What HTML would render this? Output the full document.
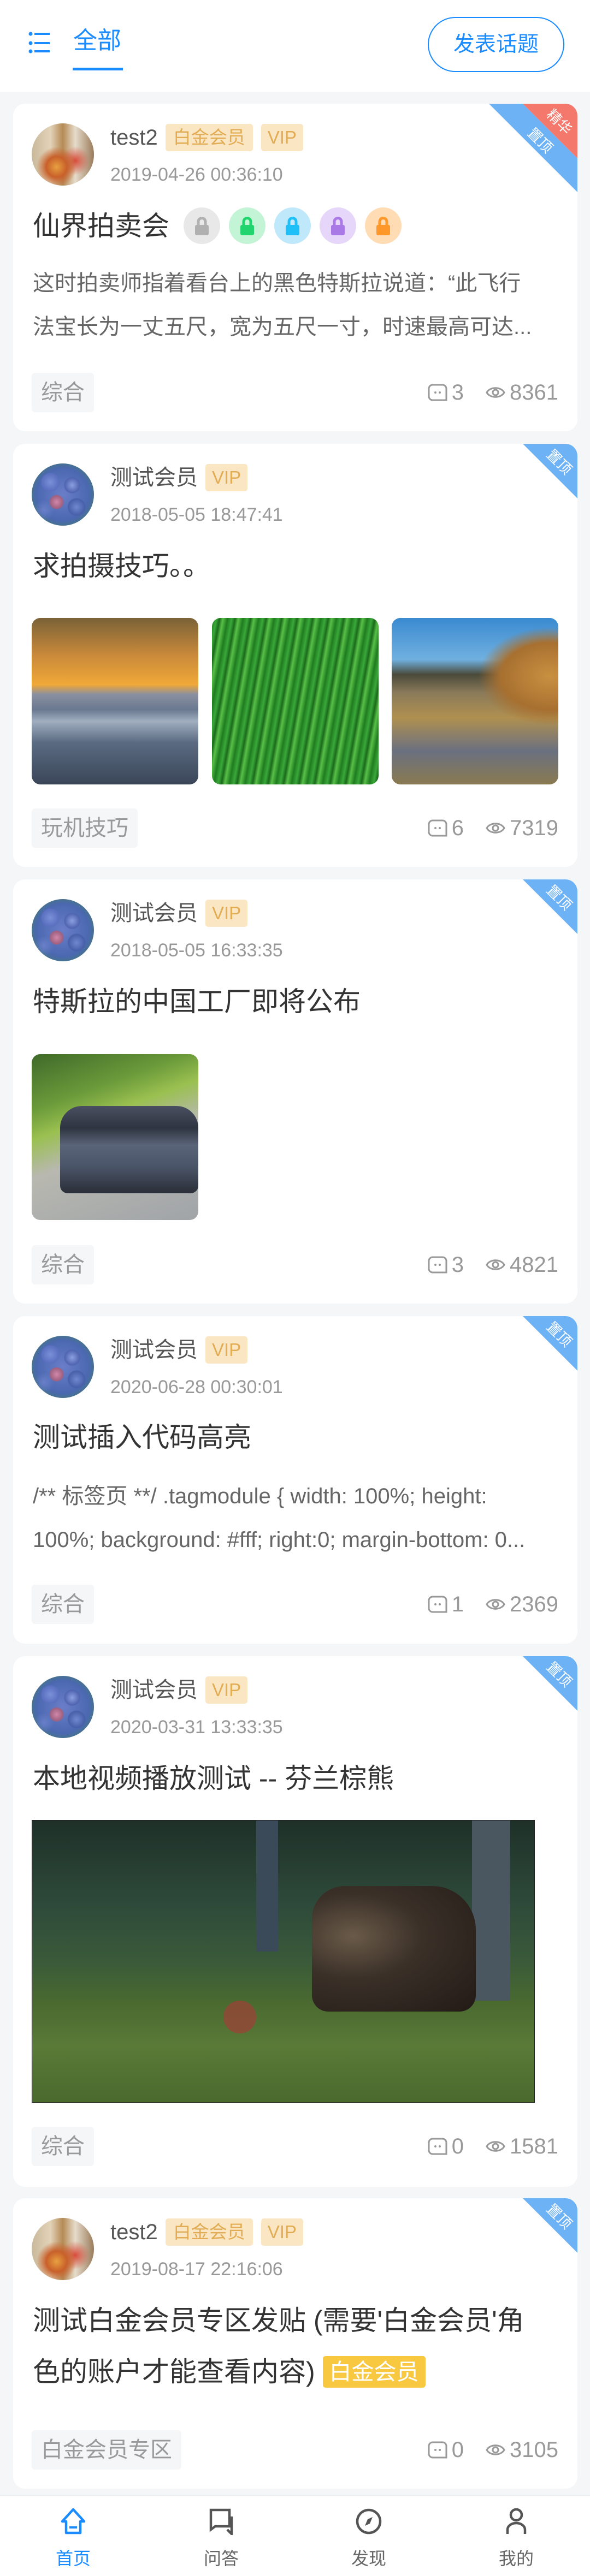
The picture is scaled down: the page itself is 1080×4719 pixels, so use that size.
<!DOCTYPE html>
<html><head><meta charset="utf-8">
<style>
*{margin:0;padding:0;box-sizing:border-box}
body{width:1080px;height:4719px;background:#f5f6f8;font-family:"Liberation Sans","Noto Sans CJK SC",sans-serif;position:relative;overflow:hidden}
.hdr{position:absolute;left:0;top:0;width:1080px;height:168px;background:#fff}
.card{position:absolute;left:24px;width:1033px;background:#fff;border-radius:22px;overflow:hidden}
.card>*{position:absolute}
.av{left:34px;top:36px;width:114px;height:114px;border-radius:50%}
.av1{background:radial-gradient(circle at 40% 70%,#e8a040 0,#c8602a 18%,transparent 35%),radial-gradient(circle at 70% 60%,#d84a3a 0,transparent 25%),linear-gradient(90deg,#c9b89a,#e2d3b8 30%,#b58a55 50%,#e6dccb 70%,#9a7a5a)}
.av2{background:radial-gradient(circle at 30% 30%,#7a90d8 0,#5a70c0 14%,transparent 16%),radial-gradient(circle at 65% 35%,#8aa0e0 0,#5064b0 13%,transparent 15%),radial-gradient(circle at 40% 62%,#d088a8 0,#a06080 12%,transparent 14%),radial-gradient(circle at 72% 70%,#7088d0 0,#4860a8 13%,transparent 15%),radial-gradient(circle at 20% 75%,#6a80c8 0,transparent 15%),radial-gradient(circle,#6a7ec8 0,#4a68b0 60%,#3f8a3a 100%)}
.nm{left:178px;top:37px;font-size:40px;line-height:50px;color:#555;white-space:nowrap}
.bd{display:inline-block;vertical-align:top;margin-left:14px;height:50px;line-height:50px;padding:0 14px;font-size:33px;color:#e2ac55;background:#fbe6c3;border-radius:5px}
.bd+.bd{margin-left:15px;padding:0 12px}
.dt{left:178px;top:110px;font-size:34px;line-height:40px;color:#999}
.tt{left:36px;top:194px;font-size:50px;line-height:60px;color:#333;white-space:nowrap}
.ex{left:36px;top:289px;font-size:40px;line-height:80px;color:#666;white-space:nowrap}
.tag{left:34px;height:72px;line-height:72px;padding:0 17px;font-size:40px;color:#999;background:#f5f6f8;border-radius:6px}
.st{right:35px;height:72px;display:flex;align-items:center;font-size:40px;color:#999}
.st svg{margin-right:8px}
.rb{right:0;top:0;width:170px;height:170px}
.lk{display:inline-block;width:67px;height:67px;border-radius:50%;vertical-align:top;margin-left:16px;position:relative;top:-4px}
.tab{position:absolute;top:4571px;left:0;width:1080px;height:148px;background:#fff;border-top:1px solid #eceef0}
.ti{position:absolute;top:22px;width:160px;text-align:center;font-size:32px;color:#666}
.ti svg{display:block;margin:0 auto 18px}
</style></head><body>
<div class="hdr">
<svg style="position:absolute;left:50px;top:58px" width="44" height="42" viewBox="0 0 44 42"><g fill="#1a8cff"><circle cx="6" cy="4" r="3.5"/><circle cx="6" cy="21" r="3.5"/><circle cx="6" cy="36" r="3.5"/><rect x="13" y="2" width="28" height="4"/><rect x="13" y="19" width="28" height="4"/><rect x="13" y="34" width="28" height="4"/></g></svg>
<div style="position:absolute;left:134px;top:50px;font-size:44px;line-height:50px;color:#1a8cff">全部</div>
<div style="position:absolute;left:133px;top:124px;width:92px;height:5px;background:#1a8cff"></div>
<div style="position:absolute;left:783px;top:31px;width:250px;height:101px;border:2px solid #1a8cff;border-radius:51px;color:#1a8cff;font-size:39px;line-height:97px;text-align:center">发表话题</div>
</div>

<!-- card 1 -->
<div class="card" style="top:190px;height:600px">
<svg class="rb" viewBox="0 0 170 170"><polygon points="8,0 70,0 170,100 170,162" fill="#6cb2f5"/><polygon points="70,0 170,0 170,100" fill="#f4786c"/>
<text x="136" y="42" fill="#fff" font-size="26" text-anchor="middle" transform="rotate(45 136 34)" font-family="Noto Sans CJK SC">精华</text>
<text x="101" y="76" fill="#fff" font-size="26" text-anchor="middle" transform="rotate(45 101 68)" font-family="Noto Sans CJK SC">置顶</text></svg>
<div class="av av1"></div>
<div class="nm">test2<span class="bd">白金会员</span><span class="bd">VIP</span></div>
<div class="dt">2019-04-26 00:36:10</div>
<div class="tt">仙界拍卖会<span class="lk" style="background:#e8e8e8;margin-left:26px"><svg width="67" height="67"><path d="M27 34V26a6.5 6.5 0 0 1 13 0V34" fill="none" stroke="#b0b0b0" stroke-width="5"/><rect x="21" y="32" width="25" height="19" rx="3" fill="#b0b0b0"/></svg></span><span class="lk" style="background:#c4f4d6"><svg width="67" height="67"><path d="M27 34V26a6.5 6.5 0 0 1 13 0V34" fill="none" stroke="#22d46e" stroke-width="5"/><rect x="21" y="32" width="25" height="19" rx="3" fill="#22d46e"/></svg></span><span class="lk" style="background:#bfe8fb"><svg width="67" height="67"><path d="M27 34V26a6.5 6.5 0 0 1 13 0V34" fill="none" stroke="#1ec0f7" stroke-width="5"/><rect x="21" y="32" width="25" height="19" rx="3" fill="#1ec0f7"/></svg></span><span class="lk" style="background:#e6d6fa"><svg width="67" height="67"><path d="M27 34V26a6.5 6.5 0 0 1 13 0V34" fill="none" stroke="#a97ae6" stroke-width="5"/><rect x="21" y="32" width="25" height="19" rx="3" fill="#a97ae6"/></svg></span><span class="lk" style="background:#ffdcb4"><svg width="67" height="67"><path d="M27 34V26a6.5 6.5 0 0 1 13 0V34" fill="none" stroke="#ff982a" stroke-width="5"/><rect x="21" y="32" width="25" height="19" rx="3" fill="#ff982a"/></svg></span></div>
<div class="ex">这时拍卖师指着看台上的黑色特斯拉说道：“此飞行<br>法宝长为一丈五尺，宽为五尺一寸，时速最高可达...</div>
<div class="tag" style="top:493px">综合</div>
<div class="st" style="top:493px"><svg width="36" height="32" viewBox="0 0 36 32"><path d="M9 2h18a7 7 0 0 1 7 7v21h-25a7 7 0 0 1-7-7V9a7 7 0 0 1 7-7z" fill="none" stroke="#999" stroke-width="3"/><circle cx="14" cy="16" r="2" fill="#999"/><circle cx="22" cy="16" r="2" fill="#999"/></svg>3<svg style="margin-left:40px" width="36" height="32" viewBox="0 0 36 32"><path d="M2 16C8 5 28 5 34 16C28 27 8 27 2 16Z" fill="none" stroke="#999" stroke-width="3"/><circle cx="18" cy="16" r="5" fill="none" stroke="#999" stroke-width="3"/></svg>8361</div>
</div>

<!-- card 2 -->
<div class="card" style="top:813px;height:775px">
<svg class="rb" viewBox="0 0 170 170"><polygon points="70,0 170,0 170,100" fill="#6cb2f5"/><text x="136" y="42" fill="#fff" font-size="26" text-anchor="middle" transform="rotate(45 136 34)" font-family="Noto Sans CJK SC">置顶</text></svg>
<div class="av av2"></div>
<div class="nm">测试会员<span class="bd" style="padding:0 12px">VIP</span></div>
<div class="dt">2018-05-05 18:47:41</div>
<div class="tt">求拍摄技巧。。</div>
<div style="left:34px;top:319px;width:305px;height:305px;border-radius:16px;background:linear-gradient(180deg,#7a6238 0,#c8893a 22%,#f0a838 40%,#8a90a0 46%,#6a7890 55%,#a0aec0 62%,#5a6a80 75%,#3a4658 100%)"></div>
<div style="left:364px;top:319px;width:305px;height:305px;border-radius:16px;background:repeating-linear-gradient(100deg,#1e7a1e 0,#3aa83a 8px,#1a6a1a 14px,#58c048 20px,#217f21 28px)"></div>
<div style="left:693px;top:319px;width:305px;height:305px;border-radius:16px;background:radial-gradient(ellipse at 95% 35%,#c89040 0,#a87030 22%,transparent 32%),linear-gradient(180deg,#3a8ad0 0,#70b0e0 25%,#4a4a3a 34%,#8a7a5a 45%,#b09050 60%,#6a7080 80%,#8a7a50 100%)"></div>
<div class="tag" style="top:668px">玩机技巧</div>
<div class="st" style="top:668px"><svg width="36" height="32" viewBox="0 0 36 32"><path d="M9 2h18a7 7 0 0 1 7 7v21h-25a7 7 0 0 1-7-7V9a7 7 0 0 1 7-7z" fill="none" stroke="#999" stroke-width="3"/><circle cx="14" cy="16" r="2" fill="#999"/><circle cx="22" cy="16" r="2" fill="#999"/></svg>6<svg style="margin-left:40px" width="36" height="32" viewBox="0 0 36 32"><path d="M2 16C8 5 28 5 34 16C28 27 8 27 2 16Z" fill="none" stroke="#999" stroke-width="3"/><circle cx="18" cy="16" r="5" fill="none" stroke="#999" stroke-width="3"/></svg>7319</div>
</div>

<!-- card 3 -->
<div class="card" style="top:1611px;height:777px">
<svg class="rb" viewBox="0 0 170 170"><polygon points="70,0 170,0 170,100" fill="#6cb2f5"/><text x="136" y="42" fill="#fff" font-size="26" text-anchor="middle" transform="rotate(45 136 34)" font-family="Noto Sans CJK SC">置顶</text></svg>
<div class="av av2"></div>
<div class="nm">测试会员<span class="bd" style="padding:0 12px">VIP</span></div>
<div class="dt">2018-05-05 16:33:35</div>
<div class="tt">特斯拉的中国工厂即将公布</div>
<div style="left:34px;top:320px;width:305px;height:304px;border-radius:16px;overflow:hidden;background:linear-gradient(160deg,#3e6a2a 0,#6a9a3a 25%,#9ac050 38%,#b8b8b0 55%,#a0a4a8 100%)"><div style="position:absolute;left:52px;top:95px;width:253px;height:160px;border-radius:40px 40px 14px 14px;background:linear-gradient(180deg,#4a5060 0,#2e3440 25%,#5a6478 45%,#4a5468 70%,#2a2e38 100%)"></div></div>
<div class="tag" style="top:670px">综合</div>
<div class="st" style="top:670px"><svg width="36" height="32" viewBox="0 0 36 32"><path d="M9 2h18a7 7 0 0 1 7 7v21h-25a7 7 0 0 1-7-7V9a7 7 0 0 1 7-7z" fill="none" stroke="#999" stroke-width="3"/><circle cx="14" cy="16" r="2" fill="#999"/><circle cx="22" cy="16" r="2" fill="#999"/></svg>3<svg style="margin-left:40px" width="36" height="32" viewBox="0 0 36 32"><path d="M2 16C8 5 28 5 34 16C28 27 8 27 2 16Z" fill="none" stroke="#999" stroke-width="3"/><circle cx="18" cy="16" r="5" fill="none" stroke="#999" stroke-width="3"/></svg>4821</div>
</div>

<!-- card 4 -->
<div class="card" style="top:2411px;height:600px">
<svg class="rb" viewBox="0 0 170 170"><polygon points="70,0 170,0 170,100" fill="#6cb2f5"/><text x="136" y="42" fill="#fff" font-size="26" text-anchor="middle" transform="rotate(45 136 34)" font-family="Noto Sans CJK SC">置顶</text></svg>
<div class="av av2"></div>
<div class="nm">测试会员<span class="bd" style="padding:0 12px">VIP</span></div>
<div class="dt">2020-06-28 00:30:01</div>
<div class="tt" style="top:192px">测试插入代码高亮</div>
<div class="ex" style="top:290px">/** 标签页 **/ .tagmodule { width: 100%; height:<br>100%; background: #fff; right:0; margin-bottom: 0...</div>
<div class="tag" style="top:492px">综合</div>
<div class="st" style="top:492px"><svg width="36" height="32" viewBox="0 0 36 32"><path d="M9 2h18a7 7 0 0 1 7 7v21h-25a7 7 0 0 1-7-7V9a7 7 0 0 1 7-7z" fill="none" stroke="#999" stroke-width="3"/><circle cx="14" cy="16" r="2" fill="#999"/><circle cx="22" cy="16" r="2" fill="#999"/></svg>1<svg style="margin-left:40px" width="36" height="32" viewBox="0 0 36 32"><path d="M2 16C8 5 28 5 34 16C28 27 8 27 2 16Z" fill="none" stroke="#999" stroke-width="3"/><circle cx="18" cy="16" r="5" fill="none" stroke="#999" stroke-width="3"/></svg>2369</div>
</div>

<!-- card 5 -->
<div class="card" style="top:3034px;height:972px">
<svg class="rb" viewBox="0 0 170 170"><polygon points="70,0 170,0 170,100" fill="#6cb2f5"/><text x="136" y="42" fill="#fff" font-size="26" text-anchor="middle" transform="rotate(45 136 34)" font-family="Noto Sans CJK SC">置顶</text></svg>
<div class="av av2"></div>
<div class="nm">测试会员<span class="bd" style="padding:0 12px">VIP</span></div>
<div class="dt">2020-03-31 13:33:35</div>
<div class="tt">本地视频播放测试 -- 芬兰棕熊</div>
<div style="left:34px;top:300px;width:921px;height:518px;overflow:hidden;background:linear-gradient(180deg,#1e3028 0,#2e4a3a 30%,#3a5a3a 50%,#4a6a30 65%,#5a7a38 80%,#4a6a2e 100%);border:1px solid #222">
<div style="position:absolute;left:410px;top:0;width:40px;height:240px;background:#3a4a58"></div>
<div style="position:absolute;left:805px;top:0;width:70px;height:330px;background:#4a5660"></div>
<div style="position:absolute;left:512px;top:120px;width:300px;height:230px;border-radius:60px 80px 30px 30px;background:radial-gradient(ellipse at 25% 40%,#6a5a48 0,#3a3028 40%,#221a16 100%)"></div>
<div style="position:absolute;left:350px;top:330px;width:60px;height:60px;border-radius:50%;background:#a04038;opacity:.7"></div>
</div>
<div class="tag" style="top:862px">综合</div>
<div class="st" style="top:862px"><svg width="36" height="32" viewBox="0 0 36 32"><path d="M9 2h18a7 7 0 0 1 7 7v21h-25a7 7 0 0 1-7-7V9a7 7 0 0 1 7-7z" fill="none" stroke="#999" stroke-width="3"/><circle cx="14" cy="16" r="2" fill="#999"/><circle cx="22" cy="16" r="2" fill="#999"/></svg>0<svg style="margin-left:40px" width="36" height="32" viewBox="0 0 36 32"><path d="M2 16C8 5 28 5 34 16C28 27 8 27 2 16Z" fill="none" stroke="#999" stroke-width="3"/><circle cx="18" cy="16" r="5" fill="none" stroke="#999" stroke-width="3"/></svg>1581</div>
</div>

<!-- card 6 -->
<div class="card" style="top:4027px;height:532px">
<svg class="rb" viewBox="0 0 170 170"><polygon points="70,0 170,0 170,100" fill="#6cb2f5"/><text x="136" y="42" fill="#fff" font-size="26" text-anchor="middle" transform="rotate(45 136 34)" font-family="Noto Sans CJK SC">置顶</text></svg>
<div class="av av1"></div>
<div class="nm">test2<span class="bd">白金会员</span><span class="bd">VIP</span></div>
<div class="dt">2019-08-17 22:16:06</div>
<div class="tt" style="top:177px;line-height:94px;white-space:nowrap">测试白金会员专区发贴 (需要'白金会员'角<br>色的账户才能查看内容) <span style="display:inline-block;vertical-align:middle;height:58px;line-height:58px;padding:0 12px;font-size:41px;color:#fff;background:#f8c840;border-radius:5px;position:relative;top:-4px">白金会员</span></div>
<div class="tag" style="top:425px">白金会员专区</div>
<div class="st" style="top:425px"><svg width="36" height="32" viewBox="0 0 36 32"><path d="M9 2h18a7 7 0 0 1 7 7v21h-25a7 7 0 0 1-7-7V9a7 7 0 0 1 7-7z" fill="none" stroke="#999" stroke-width="3"/><circle cx="14" cy="16" r="2" fill="#999"/><circle cx="22" cy="16" r="2" fill="#999"/></svg>0<svg style="margin-left:40px" width="36" height="32" viewBox="0 0 36 32"><path d="M2 16C8 5 28 5 34 16C28 27 8 27 2 16Z" fill="none" stroke="#999" stroke-width="3"/><circle cx="18" cy="16" r="5" fill="none" stroke="#999" stroke-width="3"/></svg>3105</div>
</div>

<div class="tab">
<div class="ti" style="left:54px;color:#1a8cff"><svg width="50" height="50" viewBox="0 0 50 50"><path d="M25 3L5 25h7v21h26V25h7Z" fill="none" stroke="#1a8cff" stroke-width="4.5" stroke-linejoin="round"/><rect x="18" y="34" width="14" height="4" fill="#1a8cff"/></svg>首页</div>
<div class="ti" style="left:325px"><svg width="50" height="50" viewBox="0 0 50 50"><path d="M6 4H40V34H14L6 40Z" fill="none" stroke="#555" stroke-width="4.5"/><path d="M44 16V48L36 40" fill="none" stroke="#555" stroke-width="4.5"/></svg>问答</div>
<div class="ti" style="left:595px"><svg width="50" height="50" viewBox="0 0 50 50"><circle cx="25" cy="25" r="21" fill="none" stroke="#555" stroke-width="4.5"/><path d="M32 17L27 29L18 33L23 21Z" fill="#555"/></svg>发现</div>
<div class="ti" style="left:865px"><svg width="50" height="50" viewBox="0 0 50 50"><circle cx="25" cy="13" r="10" fill="none" stroke="#555" stroke-width="4.5"/><path d="M9 48V40a16 12 0 0 1 32 0V48" fill="none" stroke="#555" stroke-width="4.5"/></svg>我的</div>
</div>
</body></html>
